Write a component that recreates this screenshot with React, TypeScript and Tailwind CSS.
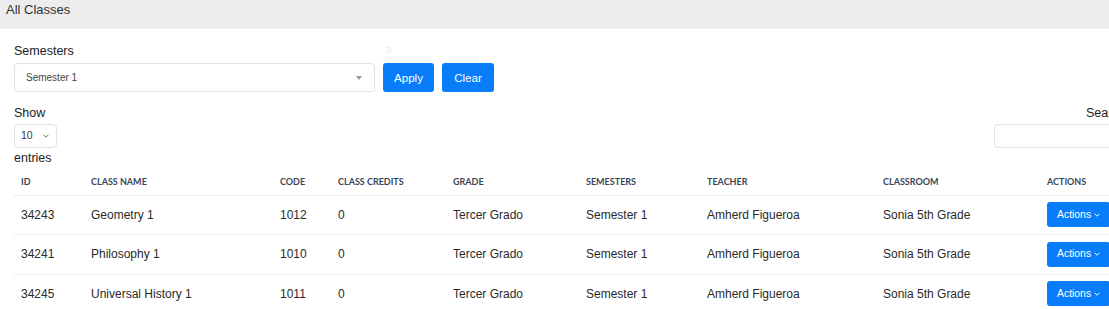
import React from "react";

const rows = [
  { id: "34243", name: "Geometry 1", code: "1012" },
  { id: "34241", name: "Philosophy 1", code: "1010" },
  { id: "34245", name: "Universal History 1", code: "1011" },
];

const cols = [
  { label: "ID", w: "w-[70px]" },
  { label: "Class Name", w: "w-[189px]" },
  { label: "Code", w: "w-[58px]" },
  { label: "Class Credits", w: "w-[115px]" },
  { label: "Grade", w: "w-[133px]" },
  { label: "Semesters", w: "w-[121px]" },
  { label: "Teacher", w: "w-[176px]" },
  { label: "Classroom", w: "w-[164px]" },
  { label: "Actions", w: "w-[90px]" },
];

const Chevron = ({ className }: { className?: string }) => (
  <svg viewBox="0 0 10 6" className={className} fill="none" stroke="currentColor" strokeWidth="1.6">
    <path d="M1 1l4 4 4-4" />
  </svg>
);

export default function App() {
  return (
    <div className="w-[1109px] h-[309px] overflow-hidden bg-white font-['Liberation_Sans',Arial,sans-serif] text-[#333]">
      <div className="h-[29px] bg-[#ededed] pl-[6px] pt-[2px] text-[13px] leading-[16px] text-[#333]">All Classes</div>

      <div className="w-[1160px] pl-[14px]">
        <div className="flex items-start pt-[14px]">
          <div className="w-[361px]">
            <div className="text-[12.5px] leading-[16px] text-[#222]">Semesters</div>
            <div className="mt-[4px] flex h-[29px] items-center justify-between rounded-[4px] border border-[#dde1e8] pl-[11px] pr-[12px]">
              <span className="text-[10px] text-[#444]">Semester 1</span>
              <span className="h-0 w-0 border-x-[3.5px] border-t-[4px] border-x-transparent border-t-[#999]" />
            </div>
          </div>
          <div className="ml-[8px] flex flex-col">
            <span className="pl-[3px] text-[10px] leading-[14px] text-[#e2ebf7]">a</span>
            <div className="mt-[6px] flex gap-[8px]">
              <button className="h-[29px] w-[51px] rounded-[3px] bg-[#087dfa] text-[11.6px] text-white">Apply</button>
              <button className="h-[29px] w-[52px] rounded-[3px] bg-[#087dfa] text-[11.6px] text-white">Clear</button>
            </div>
          </div>
        </div>

        <div className="mt-[14px] flex items-start">
          <div className="w-[980px]">
            <div className="text-[12.5px] leading-[15px] text-[#222]">Show</div>
            <div className="mt-[3px] flex h-[24px] w-[43px] items-center justify-between rounded-[4px] border border-[#dde1e8] pl-[6px] pr-[7px]">
              <span className="text-[10.5px] text-[#333]">10</span>
              <Chevron className="h-[4px] w-[6px] text-[#666]" />
            </div>
            <div className="mt-[1px] text-[12.5px] leading-[18px] text-[#222]">entries</div>
          </div>
          <div className="w-[160px]">
            <div className="pl-[92px] text-[12.5px] leading-[15px] text-[#222]">Search:</div>
            <div className="mt-[3px] h-[24px] w-[150px] rounded-[4px] border border-[#dde1e8]" />
          </div>
        </div>
      </div>

      <table className="ml-[13px] mt-[2px] w-[1116px] table-fixed border-collapse">
        <colgroup>
          {cols.map((c) => (
            <col key={c.label} className={c.w} />
          ))}
        </colgroup>
        <thead>
          <tr className="h-[26px] border-b border-[#eceff3]">
            {cols.map((c) => (
              <th
                key={c.label}
                className="px-[8px] text-left align-middle font-['Lato',sans-serif] text-[9px] font-bold uppercase text-[#3a4657]"
              >
                {c.label}
              </th>
            ))}
          </tr>
        </thead>
        <tbody className="text-[12px] text-[#2a2a2a]">
          {rows.map((r) => (
            <tr key={r.id} className="h-[39.5px] border-b border-[#eceff3]">
              <td className="px-[8px]">{r.id}</td>
              <td className="px-[8px]">{r.name}</td>
              <td className="px-[8px]">{r.code}</td>
              <td className="px-[8px]">0</td>
              <td className="px-[8px]">Tercer Grado</td>
              <td className="px-[8px]">Semester 1</td>
              <td className="px-[8px]">Amherd Figueroa</td>
              <td className="px-[8px]">Sonia 5th Grade</td>
              <td className="px-[8px]">
                <button className="flex h-[25px] items-center gap-[3px] rounded-[3px] bg-[#087dfa] pl-[10px] pr-[10px] text-[10.4px] text-white">
                  Actions
                  <Chevron className="h-[4px] w-[6px]" />
                </button>
              </td>
            </tr>
          ))}
        </tbody>
      </table>
    </div>
  );
}
